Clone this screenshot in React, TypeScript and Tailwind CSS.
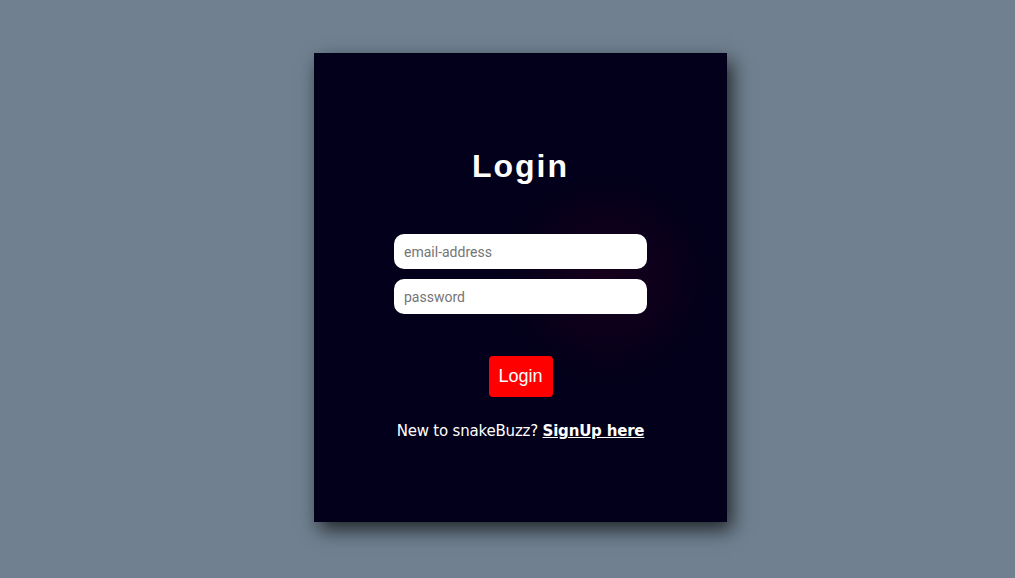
const App = () => {
  return (
    <div className="min-h-[578px] w-full bg-[#708090] flex justify-center pl-[26px] pt-[53px]">
      <div className="w-[413px] h-[469px] bg-[#02001a] bg-[radial-gradient(circle_at_71%_48%,rgba(40,0,30,0.55),rgba(2,0,26,0)_28%)] shadow-[5px_8px_18px_rgba(0,0,0,0.7)] flex flex-col items-center">
        <h1 className="mt-[93px] text-white text-[32px] font-bold tracking-[2px] leading-[40px] font-['Liberation_Sans',Arial,sans-serif]">
          Login
        </h1>
        <form className="mt-[48px] flex flex-col gap-[10px]" onSubmit={(e) => e.preventDefault()}>
          <input
            type="text"
            placeholder="email-address"
            className="w-[253px] h-[35px] rounded-[10px] bg-white px-[10px] text-[14px] font-['Roboto',sans-serif] text-black placeholder:text-[#757575] outline-none"
          />
          <input
            type="password"
            placeholder="password"
            className="w-[253px] h-[35px] rounded-[10px] bg-white px-[10px] text-[14px] font-['Roboto',sans-serif] text-black placeholder:text-[#757575] outline-none"
          />
          <button
            type="submit"
            className="self-center mt-[32px] w-[64px] h-[41px] rounded-[4px] bg-[#ff0000] text-white text-[18px] font-['Liberation_Sans',Arial,sans-serif]"
          >
            Login
          </button>
        </form>
        <p className="mt-[22px] text-white text-[15px] leading-[24px] font-['DejaVu_Sans',sans-serif] tracking-[-0.2px]">
          New to snakeBuzz?{" "}
          <a href="#" className="font-bold underline">
            SignUp here
          </a>
        </p>
      </div>
    </div>
  );
};

export default App;
